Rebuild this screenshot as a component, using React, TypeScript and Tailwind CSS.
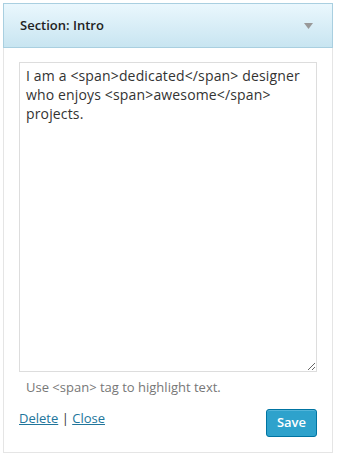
import { useState } from "react";

const initialText =
  "I am a <span>dedicated</span> designer who enjoys <span>awesome</span> projects.";

export default function App() {
  const [text, setText] = useState(initialText);

  return (
    <div className="min-h-screen bg-white pl-[3px] pt-[3px]" style={{ fontFamily: '"Open Sans", sans-serif' }}>
      <div className="w-[330px] border border-[#e5e5e5] bg-white">
        <div className="-m-px flex h-[45px] items-center justify-between border border-[#a9cfe0] bg-gradient-to-b from-[#eaf7fd] to-[#c8e5f1] pl-[16px] pr-[19px]">
          <span className="text-[13px] font-semibold text-[#222]">Section: Intro</span>
          <svg width="9" height="6" viewBox="0 0 9 6">
            <polygon points="0,0 9,0 4.5,6" fill="#999" />
          </svg>
        </div>

        <div className="px-[15px] pb-[15px] pt-[15px]">
          <textarea
            value={text}
            onChange={(e) => setText(e.target.value)}
            className="block h-[310px] w-full resize-y border border-[#dddddd] bg-white px-[6px] py-[3px] text-[14px] leading-[19px] tracking-[0.15px] text-[#333] outline-none"
            style={{ fontFamily: '"Open Sans", sans-serif' }}
          />
          <div className="mt-[6px] pl-[7px] text-[13px] leading-[18px] text-[#777]">
            Use &lt;span&gt; tag to highlight text.
          </div>

          <div className="mt-[13px] flex items-start justify-between">
            <div className="text-[13px] leading-[18px] text-[#333]">
              <a href="#" className="text-[#21759b] underline">
                Delete
              </a>{" "}
              |{" "}
              <a href="#" className="text-[#21759b] underline">
                Close
              </a>
            </div>
            <button className="h-[28px] rounded-[3px] border border-[#0074a2] bg-[#2ea2cc] px-[10px] text-[13px] font-semibold text-white shadow-[inset_0_1px_0_rgba(120,200,230,0.5)]">
              Save
            </button>
          </div>
        </div>
      </div>
    </div>
  );
}
